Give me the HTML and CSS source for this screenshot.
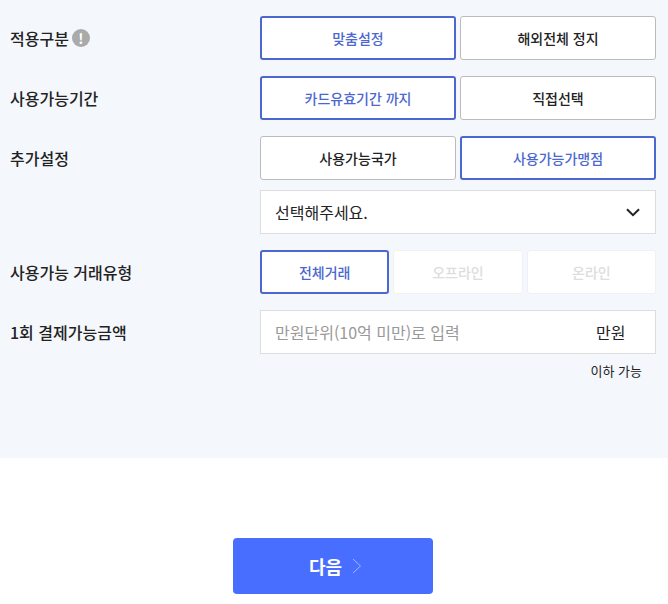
FILE: index.html
```html
<!DOCTYPE html>
<html lang="ko">

<head>
    <meta charset="UTF-8">
    <meta name="viewport" content="width=device-width, initial-scale=1.0">
    <title>카드 설정</title>
    <link rel="stylesheet" href="styles.css">
</head>

<body>
    <div class="panel">
        <div class="row">
            <div class="label">적용구분<span class="info">!</span></div>
            <div class="options">
                <button class="opt on">맞춤설정</button>
                <button class="opt">해외전체 정지</button>
            </div>
        </div>
        <div class="row">
            <div class="label">사용가능기간</div>
            <div class="options">
                <button class="opt on">카드유효기간 까지</button>
                <button class="opt">직접선택</button>
            </div>
        </div>
        <div class="row row-tight">
            <div class="label">추가설정</div>
            <div class="options">
                <button class="opt">사용가능국가</button>
                <button class="opt on">사용가능가맹점</button>
            </div>
        </div>
        <div class="row">
            <div class="label"></div>
            <div class="select">
                <span>선택해주세요.</span>
                <svg width="14" height="9" viewBox="0 0 14 9"><path d="M1 1.200l6 6 6-6" fill="none" stroke="#222" stroke-width="2"/></svg>
            </div>
        </div>
        <div class="row">
            <div class="label">사용가능 거래유형</div>
            <div class="options options-three">
                <button class="opt on">전체거래</button>
                <button class="opt off">오프라인</button>
                <button class="opt off">온라인</button>
            </div>
        </div>
        <div class="row row-tight">
            <div class="label">1회 결제가능금액</div>
            <div class="amount">
                <span class="placeholder">만원단위(10억 미만)로 입력</span>
                <span class="unit">만원</span>
            </div>
        </div>
        <div class="note">이하 가능</div>
    </div>
    <div class="footer">
        <button class="next">다음
            <svg width="10" height="16" viewBox="0 0 10 16"><path d="M1 1l7.500 7-7.500 7" fill="none" stroke="#a3b7ff" stroke-width="1"/></svg>
        </button>
    </div>
</body>

</html>
```

FILE: styles.css
```css
* {
    margin: 0;
    padding: 0;
    box-sizing: border-box;
}

body {
    font-family: "Noto Sans CJK KR", "Noto Sans", sans-serif;
    color: #222;
    background: #fff;
}

button {
    font-family: inherit;
}

.panel {
    height: 458px;
    padding: 16px 12px 0 10px;
    background: #f4f7fc;
}

.row {
    display: flex;
    align-items: center;
    margin-bottom: 16px;
}

.row-tight {
    margin-bottom: 10px;
}

.label {
    display: flex;
    align-items: center;
    width: 250px;
    font-size: 16px;
    font-weight: 500;
}

.info {
    width: 18px;
    height: 18px;
    margin-left: 3px;
    border-radius: 50%;
    font-size: 14px;
    font-weight: 700;
    line-height: 18px;
    text-align: center;
    color: #fff;
    background: #aaa;
}

.options {
    display: grid;
    grid-template-columns: repeat(2, 1fr);
    gap: 4px;
    width: 396px;
}

.options-three {
    grid-template-columns: repeat(3, 1fr);
}

.opt {
    height: 44px;
    border: 1px solid #bbb;
    border-radius: 3px;
    font-size: 14px;
    font-weight: 500;
    color: #222;
    background: #fff;
}

.opt.on {
    border: 2px solid #4c68d0;
    color: #4c68d0;
}

.opt.off {
    border-color: #f0f1f4;
    color: #ddd;
}

.select,
.amount {
    display: flex;
    align-items: center;
    justify-content: space-between;
    width: 396px;
    height: 44px;
    padding: 0 15px 0 14px;
    border: 1px solid #ddd;
    font-size: 16px;
    background: #fff;
}

.placeholder {
    color: #999;
}

.unit {
    width: 44px;
}

.note {
    margin-top: -2px;
    padding-right: 14px;
    font-size: 13px;
    line-height: 18px;
    text-align: right;
}

.footer {
    display: flex;
    justify-content: center;
    padding: 80px 2px 0 0;
}

.next {
    display: flex;
    align-items: center;
    justify-content: center;
    gap: 10px;
    width: 200px;
    height: 56px;
    padding-left: 5px;
    border: 0;
    border-radius: 4px;
    font-size: 18px;
    font-weight: 700;
    color: #fff;
    background: #486eff;
}
```
